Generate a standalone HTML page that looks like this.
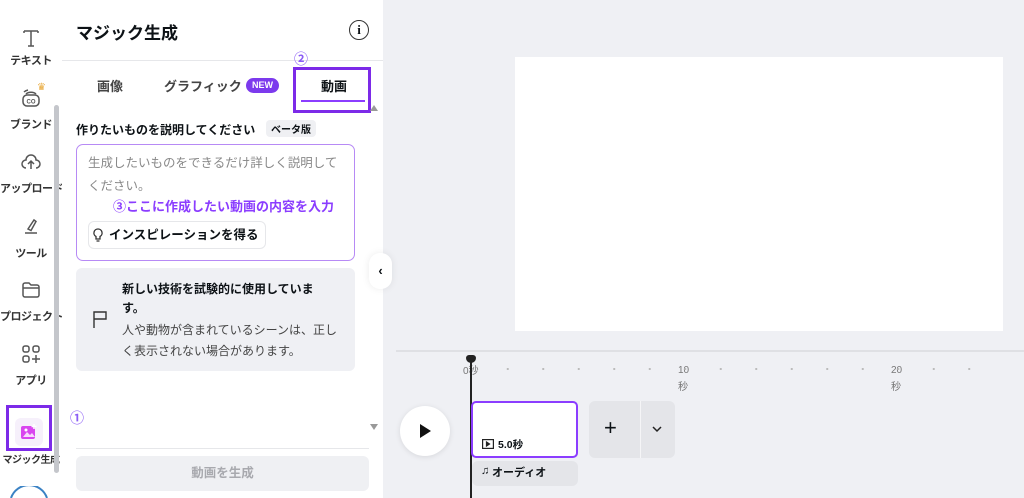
<!DOCTYPE html>
<html><head><meta charset="utf-8"><style>
*{margin:0;padding:0;box-sizing:border-box}
html,body{width:1024px;height:498px;overflow:hidden}
body{background:#eff0f4;font-family:"Liberation Sans","Noto Sans CJK JP",sans-serif;position:relative;color:#0d1216}
.a{position:absolute}
.side{left:0;top:0;width:62px;height:498px;background:#fff;overflow:hidden}
.lab{position:absolute;width:62px;left:0;text-align:center;font-size:11px;font-weight:bold;color:#333;white-space:nowrap;letter-spacing:-0.5px}
.ic{position:absolute;left:19px;width:24px;height:24px}
.panel{left:62px;top:0;width:321px;height:498px;background:#fff}
</style></head><body>
<div class="a side">
 <svg class="ic" style="top:26px" viewBox="0 0 24 24" fill="none" stroke="#555" stroke-width="1.5"><path d="M5 5h14M12 5v15M9 20h6M5 5v2M19 5v2"/></svg>
 <div class="lab" style="top:52px">テキスト</div>
 <svg class="ic" style="top:86px" viewBox="0 0 24 24" fill="none" stroke="#555" stroke-width="1.5"><rect x="4" y="9" width="16" height="11" rx="4"/><path d="M7 8a6 4 0 0 1 10 0M5 6a8 5 0 0 1 4-2"/><text x="12" y="17.5" font-size="6" text-anchor="middle" fill="#555" stroke="none" font-weight="bold">CO</text></svg>
 <div class="a" style="left:37px;top:82px;color:#e8a93b;font-size:10px">♛</div>
 <div class="lab" style="top:116px">ブランド</div>
 <svg class="ic" style="top:150px" viewBox="0 0 24 24" fill="none" stroke="#555" stroke-width="1.5"><path d="M7 18a4 4 0 0 1 0-8 5 5 0 0 1 10 0 4 4 0 0 1 0 8M12 19v-7M9 14l3-3 3 3"/></svg>
 <div class="lab" style="top:180px">アップロード</div>
 <svg class="ic" style="top:214px" viewBox="0 0 24 24" fill="none" stroke="#555" stroke-width="1.5"><path d="M9 15l6-9 2 1.5-5 9zM6 19h12"/></svg>
 <div class="lab" style="top:245px">ツール</div>
 <svg class="ic" style="top:278px" viewBox="0 0 24 24" fill="none" stroke="#555" stroke-width="1.5"><path d="M4 7a2 2 0 0 1 2-2h4l2 2h6a2 2 0 0 1 2 2v8a2 2 0 0 1-2 2H6a2 2 0 0 1-2-2zM4 10h16"/></svg>
 <div class="lab" style="top:308px">プロジェクト</div>
 <svg class="ic" style="top:342px" viewBox="0 0 24 24" fill="none" stroke="#555" stroke-width="1.5"><rect x="4" y="4" width="6" height="6" rx="2"/><rect x="14" y="4" width="6" height="6" rx="2"/><rect x="4" y="14" width="6" height="6" rx="2"/><path d="M17 13v8M13 17h8"/></svg>
 <div class="lab" style="top:372px">アプリ</div>
 <div class="a" style="left:6px;top:405px;width:46px;height:46px;border:3px solid #7c2ae8"></div>
 <div class="a" style="left:15px;top:418px;width:28px;height:28px;border-radius:6px;background:#f6f0fb"></div>
 <svg class="a" style="left:20px;top:423px" width="18" height="18" viewBox="0 0 18 18"><rect x="1" y="3" width="14" height="13" rx="2" fill="#d946ef"/><path d="M3 14l4-5 3 3 2-2 3 4z" fill="#fff" opacity=".8"/><circle cx="6" cy="7" r="1.5" fill="#fff"/><path d="M14 1v5M11.5 3.5h5" stroke="#fff" stroke-width="1.5"/></svg>
 <div class="lab" style="top:451px;font-size:10px">マジック生成</div>
 <svg class="a" style="left:8px;top:486px" width="42" height="12" viewBox="0 0 42 12"><path d="M3 12A19 19 0 0 1 39 12" fill="none" stroke="#3b82c4" stroke-width="2"/></svg>
 <div class="a" style="left:54px;top:105px;width:5px;height:368px;background:#c4c6cb;border-radius:3px"></div>
</div>
<div class="a panel">
 <div class="a" style="left:14px;top:19px;font-size:17px;font-weight:bold">マジック生成</div>
 <div class="a" style="left:287px;top:20px;width:20px;height:20px;border:1.6px solid #333;border-radius:50%;text-align:center;font-size:13px;line-height:17px;font-weight:bold;font-family:'Liberation Serif',serif">i</div>
 <div class="a" style="left:0;top:60px;width:321px;height:1px;background:#e6e7ea"></div>
 <div class="a" style="left:35px;top:76px;font-size:13px;font-weight:bold;color:#444">画像</div>
 <div class="a" style="left:102px;top:76px;font-size:13px;font-weight:bold;color:#444">グラフィック</div>
 <div class="a" style="left:184px;top:78px;width:33px;height:15px;border-radius:8px;background:#7c3aed;color:#fff;font-size:9px;font-weight:bold;text-align:center;line-height:15px">NEW</div>
 <div class="a" style="left:232px;top:49px;color:#8b5cf6;font-size:14px;font-weight:bold">②</div>
 <div class="a" style="left:231px;top:67px;width:78px;height:46px;border:3px solid #7c2ae8"></div>
 <div class="a" style="left:259px;top:76px;font-size:13px;font-weight:bold">動画</div>
 <div class="a" style="left:239px;top:100px;width:64px;height:2px;background:#8b3dff"></div>
 <div class="a" style="left:14px;top:121px;font-size:12px;font-weight:bold">作りたいものを説明してください</div>
 <div class="a" style="left:204px;top:120px;padding:1px 5px;background:#eff0f3;border-radius:4px;font-size:10px;font-weight:bold">ベータ版</div>
 <div class="a" style="left:14px;top:144px;width:279px;height:117px;border:1px solid #b78af5;border-radius:7px"></div>
 <div class="a" style="left:26px;top:152px;width:260px;font-size:12.5px;color:#888;line-height:23px">生成したいものをできるだけ詳しく説明してください。</div>
 <div class="a" style="left:51px;top:196px;font-size:13px;font-weight:bold;color:#8b3dff">③ここに作成したい動画の内容を入力</div>
 <div class="a" style="left:26px;top:221px;width:178px;height:28px;border:1px solid #e6e7ea;border-radius:6px;font-size:12.5px;font-weight:bold;line-height:26px;padding-left:20px">インスピレーションを得る</div>
 <svg class="a" style="left:30px;top:228px" width="12" height="14" viewBox="0 0 12 14" fill="none" stroke="#333" stroke-width="1.3"><path d="M6 1a4 4 0 0 0-2 7.5V11h4V8.5A4 4 0 0 0 6 1zM4.5 13h3"/></svg>
 <div class="a" style="left:14px;top:268px;width:279px;height:103px;background:#eff0f4;border-radius:6px"></div>
 <svg class="a" style="left:30px;top:309px" width="16" height="20" viewBox="0 0 16 20" fill="none" stroke="#333" stroke-width="1.4"><path d="M2 19V3h12v7H2"/></svg>
 <div class="a" style="left:60px;top:280px;width:205px;font-size:12px;font-weight:bold;line-height:19px">新しい技術を試験的に使用していま<br>す。</div>
 <div class="a" style="left:60px;top:320px;width:220px;font-size:12px;line-height:21px;color:#444">人や動物が含まれているシーンは、正しく表示されない場合があります。</div>
 <div class="a" style="left:8px;top:408px;color:#8b5cf6;font-size:14px;font-weight:bold">①</div>
 <div class="a" style="left:14px;top:448px;width:293px;height:1px;background:#e6e7ea"></div>
 <div class="a" style="left:14px;top:456px;width:293px;height:35px;background:#eff0f3;border-radius:6px;text-align:center;line-height:35px;font-size:12.5px;font-weight:bold;color:#a8a9ae">動画を生成</div>
 <div class="a" style="left:308px;top:105px;width:0;height:0;border-left:4px solid transparent;border-right:4px solid transparent;border-bottom:6px solid #999"></div>
 <div class="a" style="left:308px;top:424px;width:0;height:0;border-left:4px solid transparent;border-right:4px solid transparent;border-top:6px solid #999"></div>
</div>
<div class="a" style="left:369px;top:253px;width:23px;height:36px;background:#fff;border-radius:11px;box-shadow:0 0 8px rgba(0,0,0,.08);font-size:13px;font-weight:bold;text-align:center;line-height:36px">‹</div>
<div class="a" style="left:515px;top:57px;width:488px;height:274px;background:#fff"></div>
<div class="a" style="left:396px;top:350px;width:628px;height:2px;background:#dfe0e4"></div>
<div class="a" style="left:463px;top:362px;font-size:10px;color:#777">0秒</div>
<div class="a" style="left:678px;top:362px;font-size:10px;color:#777;line-height:17px">10<br>秒</div>
<div class="a" style="left:891px;top:362px;font-size:10px;color:#777;line-height:17px">20<br>秒</div>
<div class="a" style="left:490px;top:368px;width:500px;height:2px;background:radial-gradient(circle,#bbb 1px,transparent 1.2px) 0 0/35.5px 2px"></div>
<div class="a" style="left:470px;top:360px;width:2px;height:138px;background:#222"></div>
<div class="a" style="left:466px;top:355px;width:10px;height:8px;background:#222;border-radius:3px 3px 5px 5px"></div>
<div class="a" style="left:400px;top:406px;width:50px;height:50px;border-radius:50%;background:#fff;box-shadow:0 1px 6px rgba(0,0,0,.1)"></div>
<div class="a" style="left:420px;top:424px;width:0;height:0;border-top:7px solid transparent;border-bottom:7px solid transparent;border-left:11px solid #111"></div>
<div class="a" style="left:471px;top:401px;width:107px;height:57px;background:#fff;border:2px solid #8b3dff;border-radius:5px"></div>
<svg class="a" style="left:482px;top:439px" width="12" height="10" viewBox="0 0 12 10" fill="none" stroke="#222" stroke-width="1.2"><rect x=".6" y=".6" width="10.8" height="8.8"/><path d="M4.5 3v4l3-2z" fill="#222"/></svg>
<div class="a" style="left:498px;top:437px;font-size:10.5px;font-weight:bold">5.0秒</div>
<div class="a" style="left:472px;top:461px;width:106px;height:25px;background:#e4e5e9;border-radius:6px;font-size:11px;font-weight:bold;line-height:25px;padding-left:20px">オーディオ</div>
<div class="a" style="left:481px;top:465px;font-size:11px">♫</div>
<div class="a" style="left:589px;top:401px;width:86px;height:57px;background:#e4e5e9;border-radius:6px"></div>
<div class="a" style="left:640px;top:401px;width:1px;height:57px;background:#f5f5f7"></div>
<div class="a" style="left:604px;top:415px;font-size:22px;font-weight:300">+</div>
<svg class="a" style="left:651px;top:425px" width="12" height="8" viewBox="0 0 12 8" fill="none" stroke="#222" stroke-width="1.5"><path d="M2 2l4 4 4-4"/></svg>
</body></html>
